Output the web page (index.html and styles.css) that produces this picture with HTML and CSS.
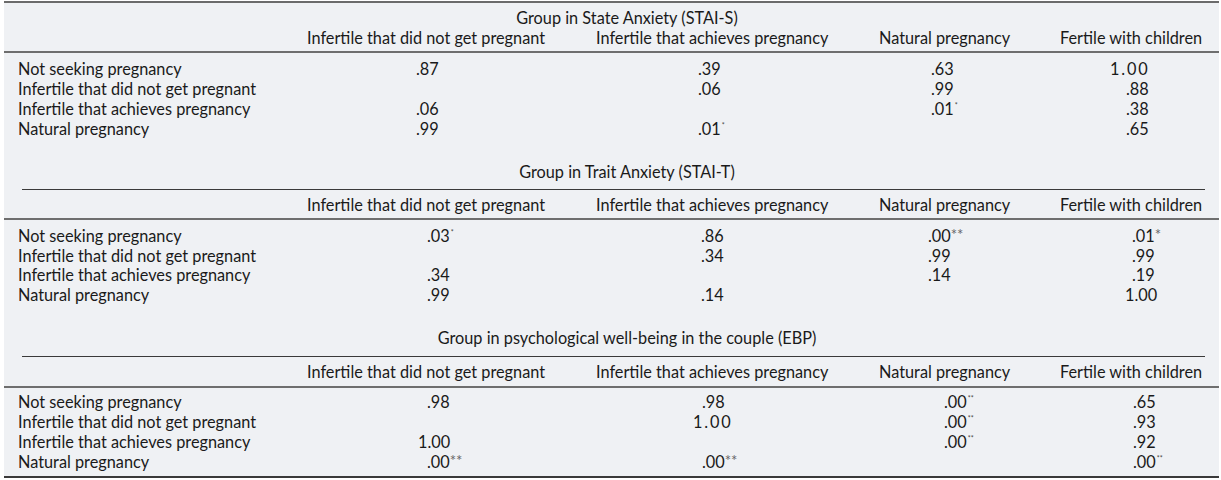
FILE: index.html
```html
<!DOCTYPE html>
<html lang="en">
<head>
<meta charset="utf-8">
<title>Group comparisons</title>
<link rel="stylesheet" href="styles.css">
</head>
<body>
<div class="panel">

  <section class="sec s1">
    <div class="title"><span>Group in State Anxiety (STAI-S)</span></div>
    <div class="head">
      <div class="grid">
        <div></div>
        <div>Infertile that did not get pregnant</div>
        <div>Infertile that achieves pregnancy</div>
        <div>Natural pregnancy</div>
        <div>Fertile with children</div>
      </div>
    </div>
    <div class="body">
      <div class="grid">
        <div>Not seeking pregnancy</div>
        <div class="c1">.87</div>
        <div class="c2">.39</div>
        <div class="c3">.63</div>
        <div class="c4 int wide">1.00</div>

        <div>Infertile that did not get pregnant</div>
        <div class="c1"></div>
        <div class="c2">.06</div>
        <div class="c3">.99</div>
        <div class="c4">.88</div>

        <div>Infertile that achieves pregnancy</div>
        <div class="c1">.06</div>
        <div class="c2"></div>
        <div class="c3">.01<sup class="sm">*</sup></div>
        <div class="c4">.38</div>

        <div>Natural pregnancy</div>
        <div class="c1">.99</div>
        <div class="c2">.01<sup class="sm">*</sup></div>
        <div class="c3"></div>
        <div class="c4">.65</div>
      </div>
    </div>
  </section>

  <section class="sec s2">
    <div class="title spanned"><span>Group in Trait Anxiety (STAI-T)</span></div>
    <div class="head">
      <div class="grid">
        <div></div>
        <div>Infertile that did not get pregnant</div>
        <div>Infertile that achieves pregnancy</div>
        <div>Natural pregnancy</div>
        <div>Fertile with children</div>
      </div>
    </div>
    <div class="body">
      <div class="grid">
        <div>Not seeking pregnancy</div>
        <div class="c1">.03<sup class="sm">*</sup></div>
        <div class="c2">.86</div>
        <div class="c3">.00<span class="lg">**</span></div>
        <div class="c4">.01<span class="lg">*</span></div>

        <div>Infertile that did not get pregnant</div>
        <div class="c1"></div>
        <div class="c2">.34</div>
        <div class="c3">.99</div>
        <div class="c4">.99</div>

        <div>Infertile that achieves pregnancy</div>
        <div class="c1">.34</div>
        <div class="c2"></div>
        <div class="c3">.14</div>
        <div class="c4">.19</div>

        <div>Natural pregnancy</div>
        <div class="c1">.99</div>
        <div class="c2">.14</div>
        <div class="c3"></div>
        <div class="c4 int">1.00</div>
      </div>
    </div>
  </section>

  <section class="sec s3">
    <div class="title spanned"><span>Group in psychological well-being in the couple (EBP)</span></div>
    <div class="head">
      <div class="grid">
        <div></div>
        <div>Infertile that did not get pregnant</div>
        <div>Infertile that achieves pregnancy</div>
        <div>Natural pregnancy</div>
        <div>Fertile with children</div>
      </div>
    </div>
    <div class="body last">
      <div class="grid">
        <div>Not seeking pregnancy</div>
        <div class="c1">.98</div>
        <div class="c2">.98</div>
        <div class="c3">.00<sup class="sm">**</sup></div>
        <div class="c4">.65</div>

        <div>Infertile that did not get pregnant</div>
        <div class="c1"></div>
        <div class="c2 int wide">1.00</div>
        <div class="c3">.00<sup class="sm">**</sup></div>
        <div class="c4">.93</div>

        <div>Infertile that achieves pregnancy</div>
        <div class="c1 int">1.00</div>
        <div class="c2"></div>
        <div class="c3">.00<sup class="sm">**</sup></div>
        <div class="c4">.92</div>

        <div>Natural pregnancy</div>
        <div class="c1">.00<span class="lg">**</span></div>
        <div class="c2">.00<span class="lg">**</span></div>
        <div class="c3"></div>
        <div class="c4">.00<sup class="sm">**</sup></div>
      </div>
    </div>
  </section>

</div>
</body>
</html>
```
FILE: styles.css
```css
html, body {
  margin: 0;
  padding: 0;
  background: #ffffff;
}

body {
  font-family: "Lato", "Liberation Sans", sans-serif;
  font-size: 16.3px;
  line-height: 20px;
  color: #1a1a1a;
}

.panel {
  margin: 1px 0 0 4px;
  width: 1215px;
  background: #eff1f4;
  border-top: 2px solid #6b6b6b;
}

.grid {
  display: grid;
  grid-template-columns: 239px 239px 233px 131px 145px;
  column-gap: 50px;
  white-space: nowrap;
}

.title {
  margin: 0 14px 0 18px;
  padding-left: 27px;
  text-align: center;
  white-space: nowrap;
}

.spanned {
  border-bottom: 1px solid #3a3a3a;
}

.head {
  border-bottom: 2px solid #6e6e6e;
}

.head .grid,
.body .grid {
  padding-left: 14px;
}

/* section 1 vertical rhythm */
.s1 .title { padding-top: 5px; }
.s1 .head { padding-bottom: 3px; }
.s1 .body { padding-top: 6px; }

/* section 2 */
.s2 { padding-top: 23px; }
.s2 .title { padding-bottom: 7px; }
.s2 .head { padding-top: 5px; padding-bottom: 3px; }
.s2 .body { padding-top: 6px; }
.s2 .body .grid { line-height: 19.5px; }

/* section 3 */
.s3 { padding-top: 24px; }
.s3 .title { padding-bottom: 8px; }
.s3 .head { padding-top: 5px; padding-bottom: 4px; }
.s3 .body { padding-top: 4px; padding-bottom: 4px; }

.last {
  border-bottom: 2px solid #3a3a3a;
}

/* value offsets inside the value columns */
.s1 .c1 { padding-left: 109px; }
.s1 .c2 { padding-left: 102px; }
.s1 .c3 { padding-left: 52px; }
.s1 .c4 { padding-left: 66px; }
.s1 .c4.int { padding-left: 50px; }

.s2 .c1 { padding-left: 120px; }
.s2 .c2 { padding-left: 105px; }
.s2 .c3 { padding-left: 49px; }
.s2 .c4 { padding-left: 72px; }
.s2 .c4.int { padding-left: 65px; }

.s3 .c1 { padding-left: 120px; }
.s3 .c1.int { padding-left: 111px; }
.s3 .c2 { padding-left: 106px; }
.s3 .c2.int { padding-left: 97px; }
.s3 .c3 { padding-left: 65px; }
.s3 .c4 { padding-left: 73px; }

.wide {
  letter-spacing: 1.8px;
}

/* footnote marks */
.sm {
  font-size: 7px;
  line-height: 0;
  vertical-align: 7px;
  margin-left: 1px;
  color: #444444;
}

.lg {
  font-size: 15px;
  line-height: 0;
  position: relative;
  top: -2px;
  color: #666666;
}
```
